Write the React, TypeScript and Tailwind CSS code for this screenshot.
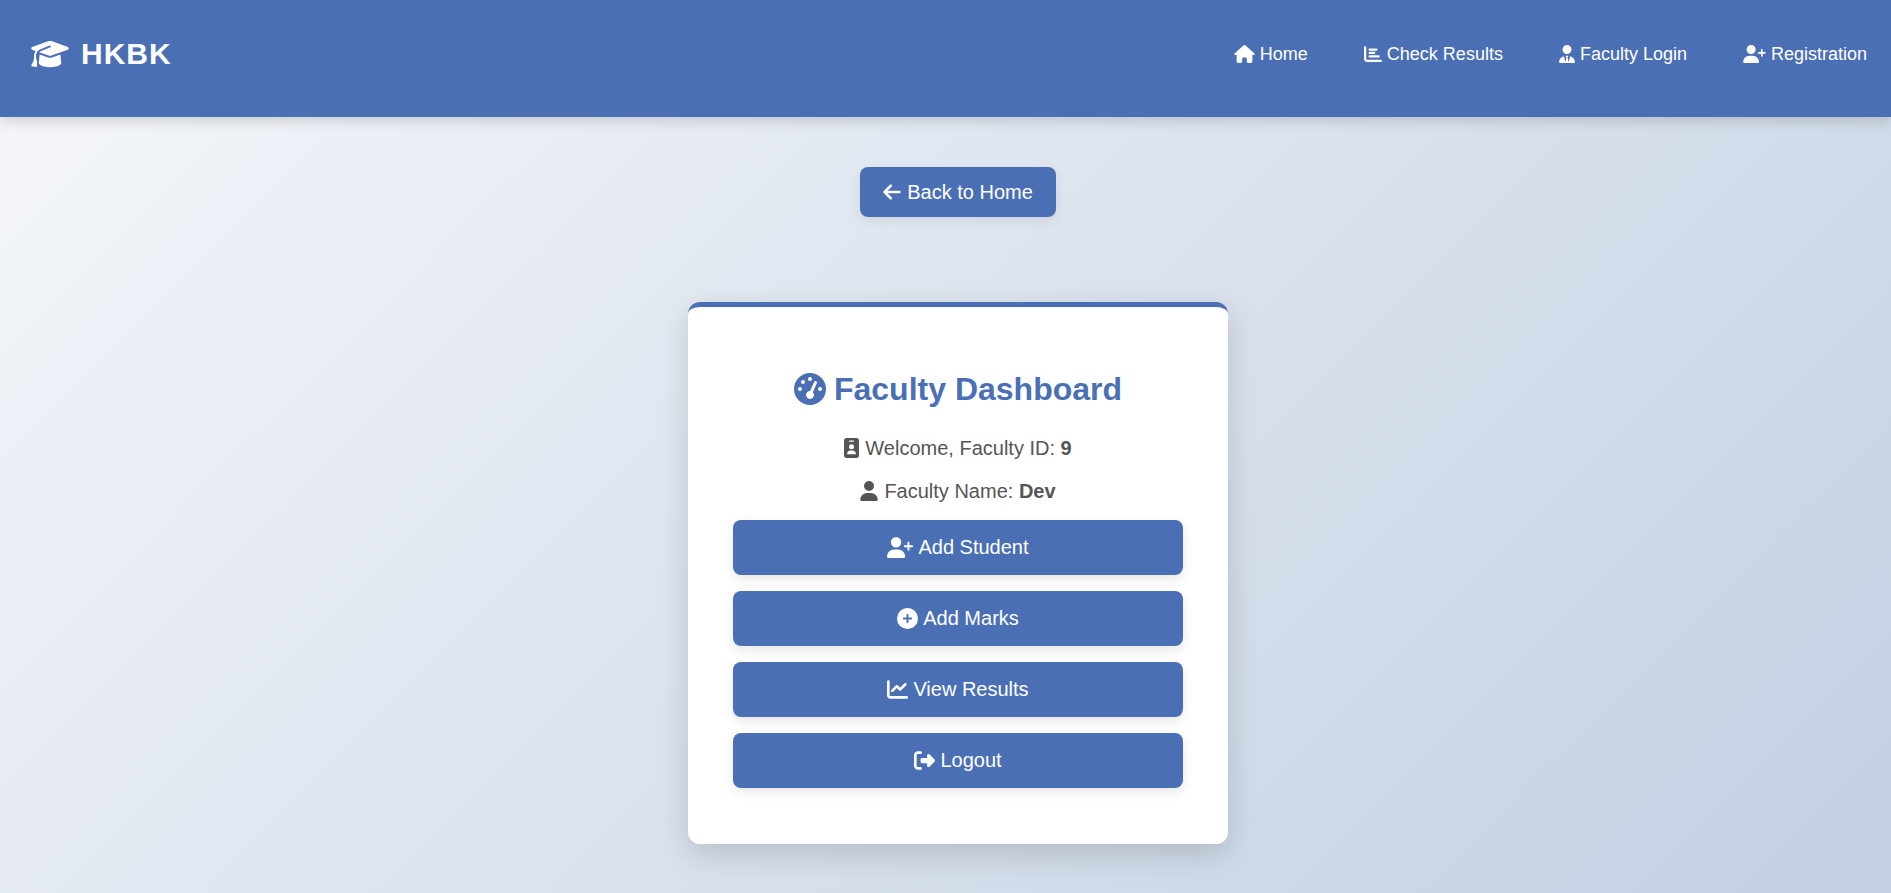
import type { IconType } from "react-icons";
import {
  FaArrowLeft,
  FaChartBar,
  FaChartLine,
  FaCirclePlus,
  FaGaugeHigh,
  FaGraduationCap,
  FaHouse,
  FaIdBadge,
  FaRightFromBracket,
  FaUser,
  FaUserPlus,
  FaUserTie,
} from "react-icons/fa6";

type Item = { label: string; icon: IconType; iconSize: string };

const navLinks: Item[] = [
  { label: "Home", icon: FaHouse, iconSize: "h-[18px] w-[21px]" },
  { label: "Check Results", icon: FaChartBar, iconSize: "h-[18px] w-[18px]" },
  { label: "Faculty Login", icon: FaUserTie, iconSize: "h-[18px] w-[16px]" },
  { label: "Registration", icon: FaUserPlus, iconSize: "h-[18px] w-[23px]" },
];

const actions: Item[] = [
  { label: "Add Student", icon: FaUserPlus, iconSize: "h-[21px] w-[26px]" },
  { label: "Add Marks", icon: FaCirclePlus, iconSize: "h-[21px] w-[21px]" },
  { label: "View Results", icon: FaChartLine, iconSize: "h-[21px] w-[21px]" },
  { label: "Logout", icon: FaRightFromBracket, iconSize: "h-[21px] w-[21px]" },
];

function Header() {
  return (
    <header className="flex items-start justify-between bg-[#4a6fb5] pt-8 pr-6 pb-[41px] pl-[31px] text-white shadow-[0_4px_12px_rgba(0,0,0,0.15)]">
      <a href="#" className="flex items-center gap-3 text-[30px] leading-[44px] font-bold tracking-[1px]">
        <FaGraduationCap className="h-[30px] w-[38px]" />
        HKBK
      </a>
      <nav>
        <ul className="flex gap-14">
          {navLinks.map(({ label, icon: Icon, iconSize }) => (
            <li key={label}>
              <a href="#" className="flex items-center gap-[5px] text-[18px] leading-[44px]">
                <Icon className={iconSize} />
                {label}
              </a>
            </li>
          ))}
        </ul>
      </nav>
    </header>
  );
}

export default function App() {
  return (
    <div className="flex min-h-screen flex-col bg-linear-135 from-[#f5f7fa] to-[#c3cfe2] font-['Liberation_Sans',Arial,sans-serif]">
      <Header />
      <main className="flex flex-col items-center pt-[50px] pb-10 pl-[25px]">
        <a
          href="#"
          className="flex items-center gap-1.5 rounded-lg bg-[#4a6fb5] px-[23px] text-[20px] leading-[50px] text-white shadow-[0_4px_12px_rgba(0,0,0,0.08)]"
        >
          <FaArrowLeft className="h-5 w-[18px]" />
          Back to Home
        </a>

        <section className="mt-[85px] w-full max-w-[540px] rounded-xl border-t-[5px] border-[#4a6fb5] bg-white px-[45px] pt-[60px] pb-14 text-center shadow-[0_10px_30px_rgba(0,0,0,0.15)]">
          <h1 className="flex items-center justify-center gap-2 text-[32px] leading-[44px] font-bold text-[#4a6fb5]">
            <FaGaugeHigh className="h-8 w-8" />
            Faculty Dashboard
          </h1>
          <p className="mt-5 flex items-center justify-center gap-1.5 text-[20px] leading-[34px] text-[#555555]">
            <FaIdBadge className="h-5 w-[15px]" />
            <span>
              Welcome, Faculty ID: <strong>9</strong>
            </span>
          </p>
          <p className="mt-[9px] flex items-center justify-center gap-1.5 text-[20px] leading-[34px] text-[#555555]">
            <FaUser className="h-5 w-[18px]" />
            <span>
              Faculty Name: <strong>Dev</strong>
            </span>
          </p>
          <div className="mt-3 flex flex-col gap-4">
            {actions.map(({ label, icon: Icon, iconSize }) => (
              <button
                key={label}
                type="button"
                className="flex cursor-pointer items-center justify-center gap-[5px] rounded-lg bg-[#4a6fb5] text-[20px] leading-[55px] text-white shadow-[0_4px_12px_rgba(0,0,0,0.1)]"
              >
                <Icon className={iconSize} />
                {label}
              </button>
            ))}
          </div>
        </section>
      </main>
    </div>
  );
}
